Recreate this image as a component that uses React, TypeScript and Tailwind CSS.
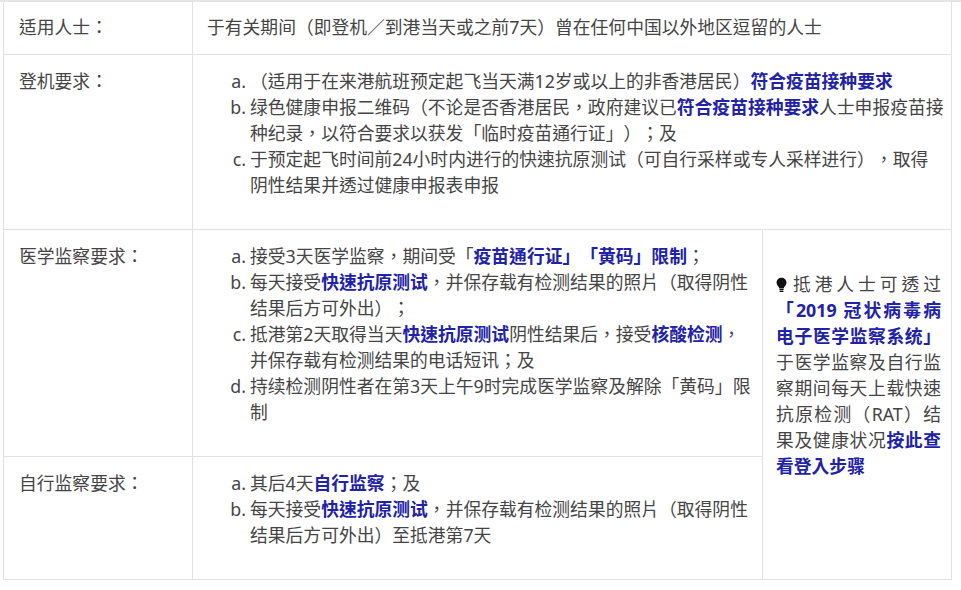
import React from "react";

const B = "font-bold text-[#2222a6]";

function Item({ m, children }: { m: string; children: React.ReactNode }) {
  return (
    <div className="flex">
      <span className="w-[43px] shrink-0 pr-[4px] text-right">{m}</span>
      <div className="whitespace-nowrap">{children}</div>
    </div>
  );
}

function Bulb() {
  return (
    <svg width="11" height="16" viewBox="0 0 12 17" className="mr-[2px] inline-block align-[-2px]">
      <path d="M6 0.5C2.9 0.5 0.6 2.8 0.6 5.7c0 2 1.1 3.3 2 4.4.6.7.9 1.4.9 2.1h5c0-.7.3-1.4.9-2.1.9-1.1 2-2.4 2-4.4C11.4 2.8 9.1.5 6 .5z" fill="#111" />
      <rect x="3.6" y="12.9" width="4.8" height="1.4" rx="0.5" fill="#111" />
      <rect x="3.8" y="14.7" width="4.4" height="1.3" rx="0.5" fill="#111" />
    </svg>
  );
}

export default function App() {
  const td = "border border-[#e2e2e2] align-top";
  const j = "text-justify [text-align-last:justify]";
  return (
    <div className="min-h-[590px] w-[961px] bg-white font-['Noto_Sans','Noto_Sans_CJK_TC',sans-serif] text-[17.8px] leading-[26px] text-[#454545] [text-spacing-trim:space-all]">
      <div className="h-[2px] bg-[#e6e6e6]" />
      <table className="ml-[3px] w-[948px] table-fixed border-collapse">
        <colgroup>
          <col className="w-[189px]" />
          <col className="w-[570px]" />
          <col className="w-[189px]" />
        </colgroup>
        <tbody>
          <tr className="h-[52px]">
            <td className={`${td} border-t-0 pl-[15px] pt-[12px]`}>适用人士：</td>
            <td className={`${td} border-t-0 pl-[14px] pt-[12px]`} colSpan={2}>
              于有关期间（即登机／到港当天或之前7天）曾在任何中国以外地区逗留的人士
            </td>
          </tr>
          <tr className="h-[175px]">
            <td className={`${td} pl-[15px] pt-[13px]`}>登机要求：</td>
            <td className={`${td} pl-[14px] pt-[13px]`} colSpan={2}>
              <Item m="a.">
                （适用于在来港航班预定起飞当天满12岁或以上的非香港居民）<span className={B}>符合疫苗接种要求</span>
              </Item>
              <Item m="b.">
                绿色健康申报二维码（不论是否香港居民，政府建议已<span className={B}>符合疫苗接种要求</span>人士申报疫苗接
                <br />
                种纪录，以符合要求以获发「临时疫苗通行证」）；及
              </Item>
              <Item m="c.">
                于预定起飞时间前24小时内进行的快速抗原测试（可自行采样或专人采样进行），取得
                <br />
                阴性结果并透过健康申报表申报
              </Item>
            </td>
          </tr>
          <tr className="h-[227px]">
            <td className={`${td} pl-[15px] pt-[13px]`}>医学监察要求：</td>
            <td className={`${td} pl-[14px] pt-[13px]`}>
              <Item m="a.">
                接受3天医学监察，期间受「<span className={B}>疫苗通行证」「黄码」限制</span>；
              </Item>
              <Item m="b.">
                每天接受<span className={B}>快速抗原测试</span>，并保存载有检测结果的照片（取得阴性
                <br />
                结果后方可外出）；
              </Item>
              <Item m="c.">
                抵港第2天取得当天<span className={B}>快速抗原测试</span>阴性结果后，接受<span className={B}>核酸检测</span>，
                <br />
                并保存载有检测结果的电话短讯；及
              </Item>
              <Item m="d.">
                持续检测阴性者在第3天上午9时完成医学监察及解除「黄码」限
                <br />制
              </Item>
            </td>
            <td className={`${td} pl-[13px] pr-[10px] pt-[41px]`} rowSpan={2}>
              <div className={j}>
                <Bulb />抵港人士可透过
              </div>
              <div className={`${B} ${j}`}>「2019 冠状病毒病</div>
              <div className={`${B} ${j}`}>电子医学监察系统」</div>
              <div className={j}>于医学监察及自行监</div>
              <div className={j}>察期间每天上载快速</div>
              <div className={j}>抗原检测（RAT）结</div>
              <div className={j}>
                果及健康状况<span className={B}>按此查</span>
              </div>
              <div className={B}>看登入步骤</div>
            </td>
          </tr>
          <tr className="h-[123px]">
            <td className={`${td} pl-[15px] pt-[13px]`}>自行监察要求：</td>
            <td className={`${td} pl-[14px] pt-[13px]`}>
              <Item m="a.">
                其后4天<span className={B}>自行监察</span>；及
              </Item>
              <Item m="b.">
                每天接受<span className={B}>快速抗原测试</span>，并保存载有检测结果的照片（取得阴性
                <br />
                结果后方可外出）至抵港第7天
              </Item>
            </td>
          </tr>
        </tbody>
      </table>
    </div>
  );
}
